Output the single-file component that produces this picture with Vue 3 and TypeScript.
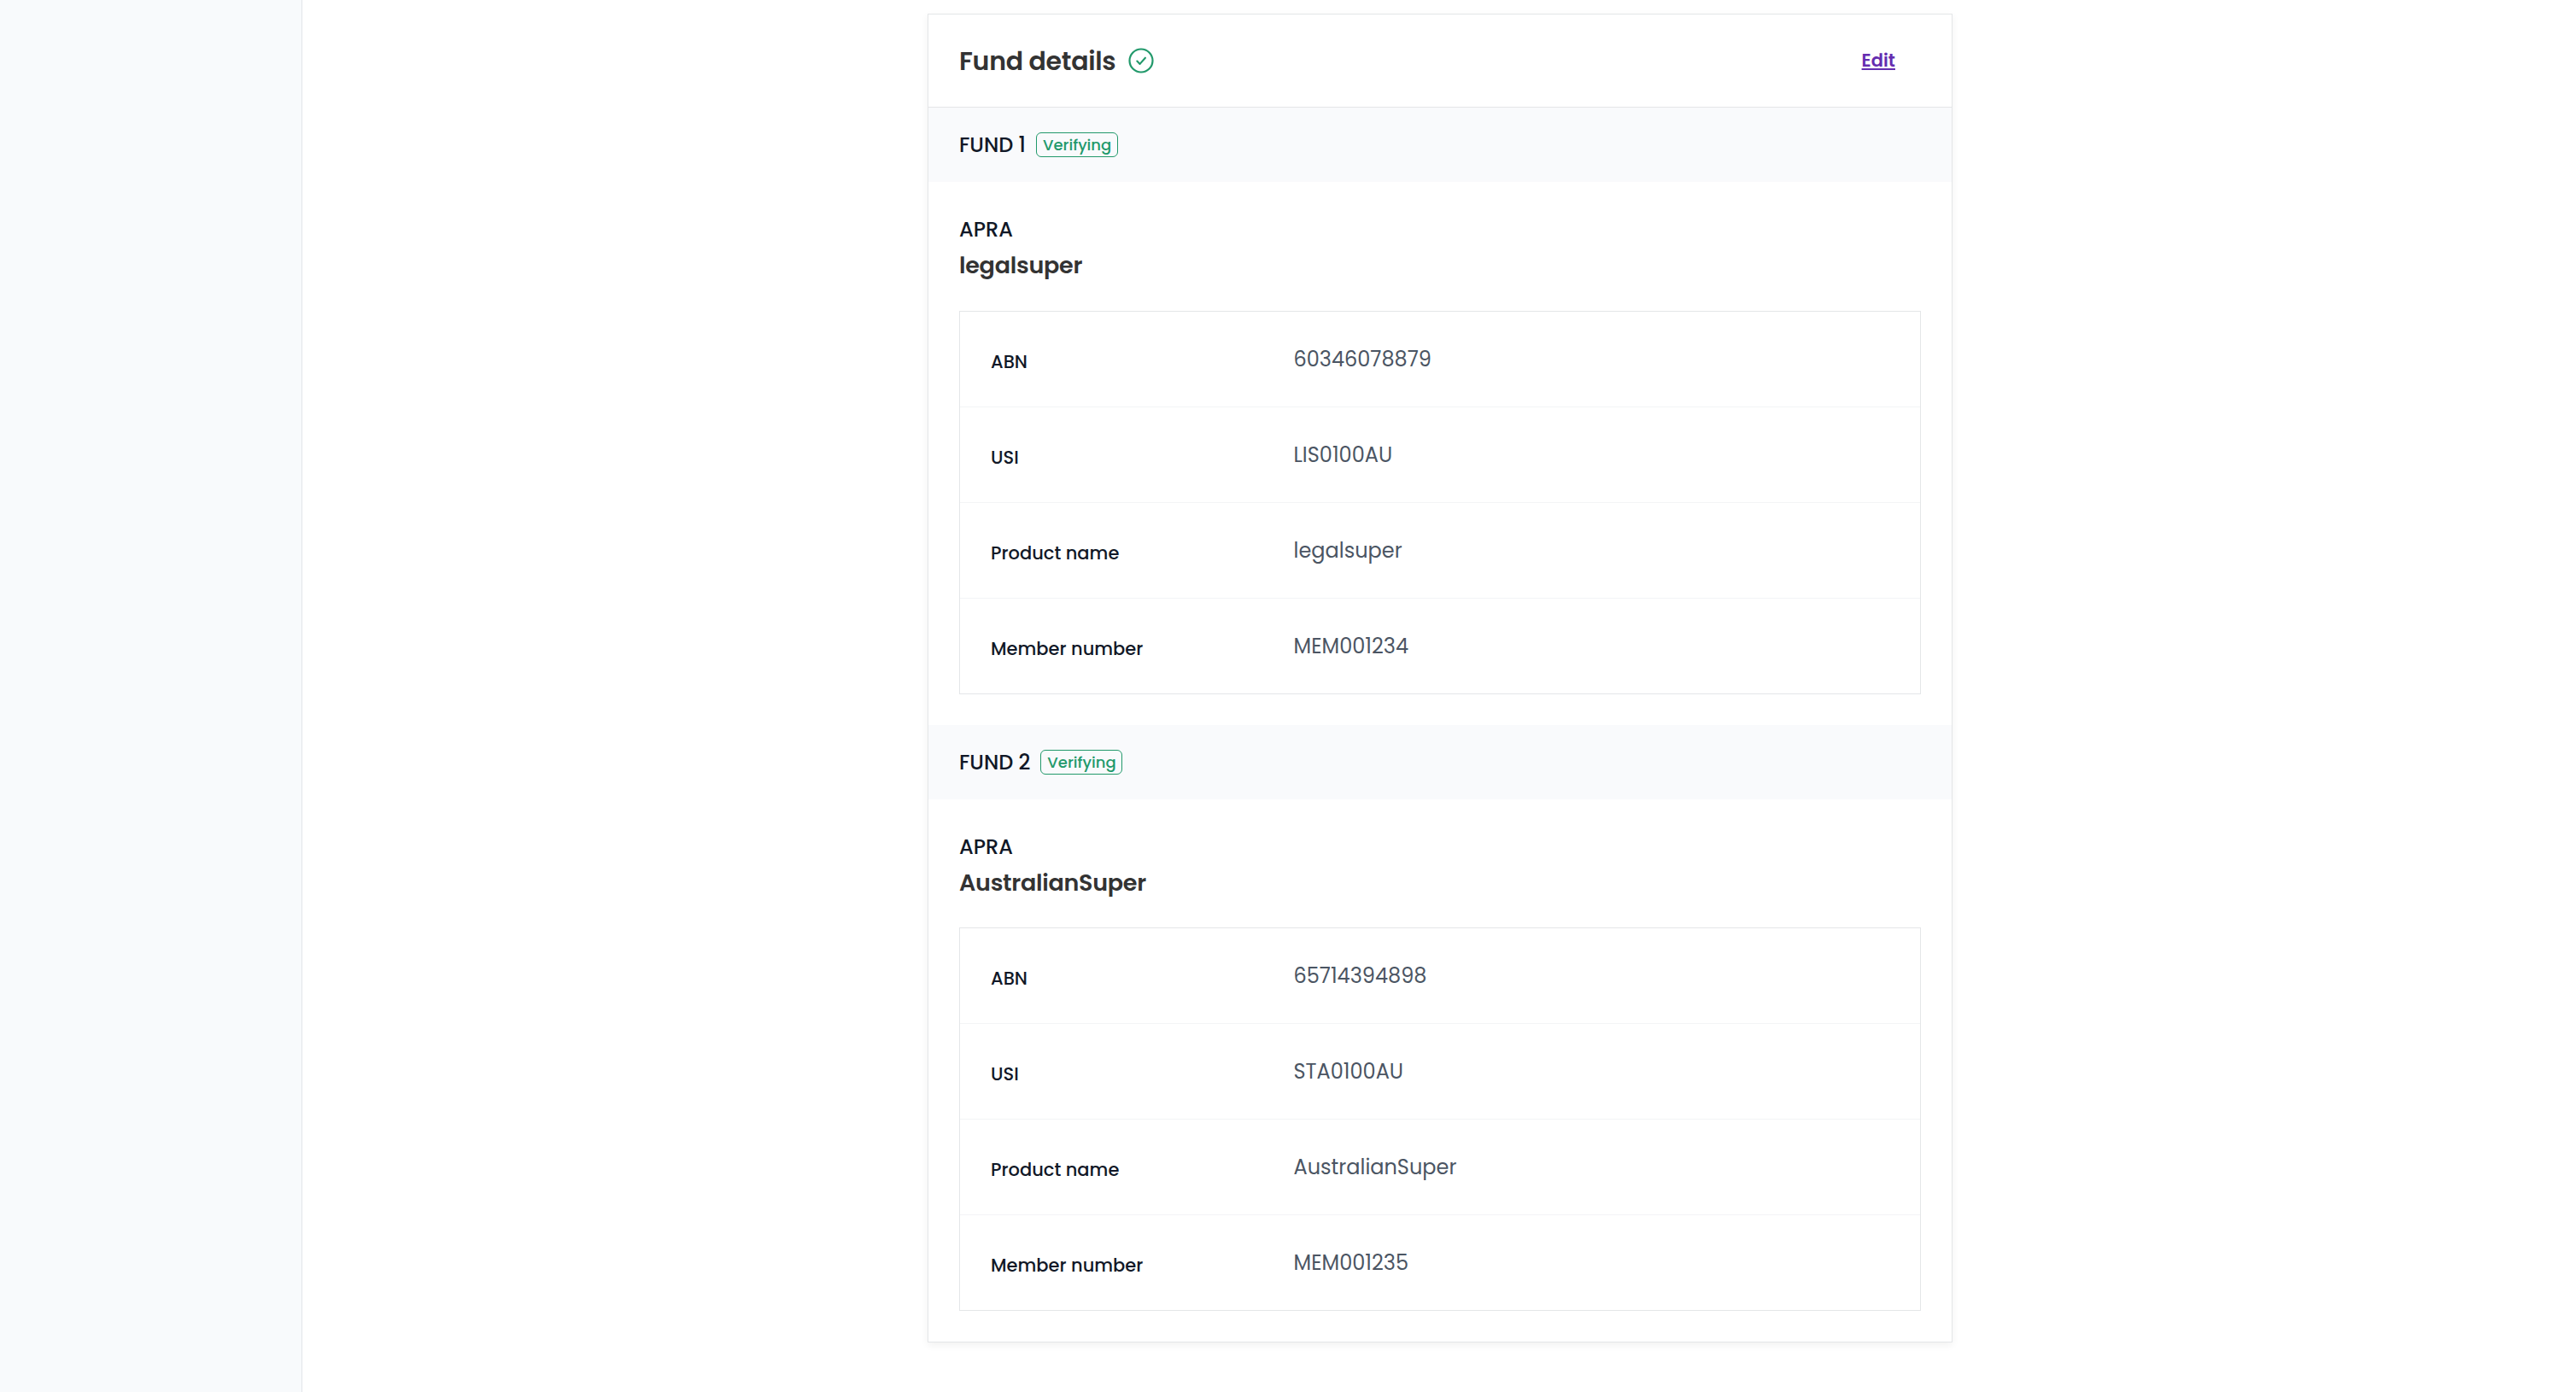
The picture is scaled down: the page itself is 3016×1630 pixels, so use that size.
<script setup lang="ts">
interface Row {
  label: string
  value: string
}

interface Fund {
  heading: string
  status: string
  type: string
  name: string
  rows: Row[]
}

const funds: Fund[] = [
  {
    heading: 'FUND 1',
    status: 'Verifying',
    type: 'APRA',
    name: 'legalsuper',
    rows: [
      { label: 'ABN', value: '60346078879' },
      { label: 'USI', value: 'LIS0100AU' },
      { label: 'Product name', value: 'legalsuper' },
      { label: 'Member number', value: 'MEM001234' },
    ],
  },
  {
    heading: 'FUND 2',
    status: 'Verifying',
    type: 'APRA',
    name: 'AustralianSuper',
    rows: [
      { label: 'ABN', value: '65714394898' },
      { label: 'USI', value: 'STA0100AU' },
      { label: 'Product name', value: 'AustralianSuper' },
      { label: 'Member number', value: 'MEM001235' },
    ],
  },
]
</script>

<template>
  <div class="page">
    <aside class="sidebar"></aside>
    <main class="main">
      <section class="card">
        <header class="card-header">
          <h2 class="title">Fund details</h2>
          <svg class="check" viewBox="0 0 32 32" fill="none" stroke="currentColor">
            <circle cx="16" cy="16" r="13.5" stroke-width="2.2" />
            <path d="M11.3 16.6 14.6 19.9 20.9 12.7" stroke-width="2.1" stroke-linecap="round" stroke-linejoin="round" />
          </svg>
          <a class="edit">Edit</a>
        </header>

        <article v-for="fund in funds" :key="fund.heading" class="fund">
          <div class="fund-bar">
            <h3 class="fund-heading">{{ fund.heading }}</h3>
            <span class="badge">{{ fund.status }}</span>
          </div>
          <div class="fund-body">
            <div class="type">{{ fund.type }}</div>
            <div class="name">{{ fund.name }}</div>
            <dl class="table">
              <div v-for="row in fund.rows" :key="row.label" class="row">
                <dt class="label">{{ row.label }}</dt>
                <dd class="value">{{ row.value }}</dd>
              </div>
            </dl>
          </div>
        </article>
      </section>
    </main>
  </div>
</template>

<style>
html,
body {
  margin: 0;
  background: #fff;
}
</style>

<style scoped>
.page {
  display: flex;
  height: 1630px;
  overflow: hidden;
  font-family: Poppins, Inter, "Liberation Sans", sans-serif;
  color: #111827;
}

.page * {
  box-sizing: border-box;
}

.sidebar {
  flex: none;
  width: 354px;
  background: #f8fafc;
  border-right: 1px solid #e2e5e9;
}

.main {
  flex: 1;
  padding: 16px 0 0 732px;
}

.card {
  width: 1200px;
  height: 1556px;
  background: #fff;
  border: 1px solid #e4e6e8;
  box-shadow: 0 3px 9px rgba(0, 0, 0, 0.06);
}

.card-header {
  display: flex;
  align-items: center;
  height: 109px;
  padding: 0 66px 0 36px;
  border-bottom: 1px solid #e4e6e8;
}

.title {
  margin: 1px 0 0;
  font-size: 30px;
  line-height: 43px;
  font-weight: 600;
  letter-spacing: -0.01em;
  color: #333;
  white-space: nowrap;
}

.check {
  flex: none;
  width: 32px;
  height: 32px;
  margin-left: 13.5px;
  color: #22996b;
}

.edit {
  margin: 0 0 1px auto;
  font-size: 21px;
  line-height: 29px;
  font-weight: 600;
  color: #652db0;
  text-decoration: underline;
  text-decoration-thickness: 2px;
  text-underline-offset: 2px;
  text-decoration-skip-ink: none;
}

.fund-bar {
  display: flex;
  align-items: center;
  height: 87px;
  padding: 0 36px;
  background: #f9fafc;
}

.fund-heading {
  margin: 0 12px 0 0;
  font-size: 24px;
  line-height: 33px;
  font-weight: 500;
  white-space: nowrap;
}

.badge {
  width: 96px;
  height: 29px;
  padding: 1px 0 0 7px;
  border: 1px solid #22996b;
  border-radius: 6px;
  font-size: 18px;
  line-height: 25px;
  font-weight: 500;
  color: #22996b;
  white-space: nowrap;
}

.fund-body {
  padding: 40px 36px 36px;
}

.type {
  font-size: 24px;
  line-height: 31px;
  font-weight: 500;
}

.name {
  margin: 6px 0 33px;
  font-size: 27px;
  line-height: 41px;
  font-weight: 600;
  letter-spacing: -0.01em;
  color: #333;
}

.fund:last-child .name {
  margin-bottom: 32px;
}

.table {
  margin: 0;
  border: 1px solid #e4e6e8;
}

.row {
  display: grid;
  grid-template-columns: 354.5px 1fr;
  align-items: center;
  height: 112px;
  padding: 0 36px;
  border-bottom: 1px solid #f3f4f6;
}

.row:last-child {
  height: 112px;
  border-bottom-color: transparent;
  margin-bottom: -1px;
}

.label {
  padding-top: 6px;
  font-size: 21px;
  line-height: 29px;
  font-weight: 500;
}

.value {
  margin: 0;
  font-size: 24px;
  line-height: 33px;
  color: #4b5563;
}
</style>
